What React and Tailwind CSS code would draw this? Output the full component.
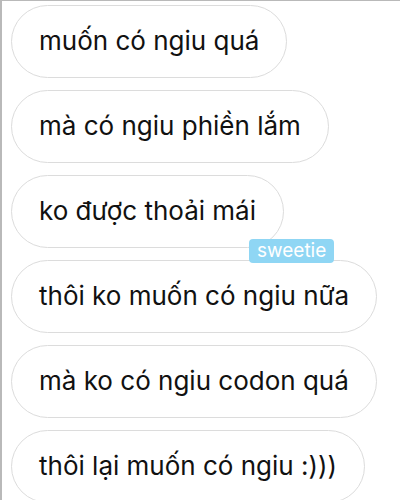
import React from "react";

const lines = [
    "muốn có ngiu quá",
    "mà có ngiu phiền lắm",
    "ko được thoải mái",
    "thôi ko muốn có ngiu nữa",
    "mà ko có ngiu codon quá",
    "thôi lại muốn có ngiu :)))",
];

const Bubble = ({ text, tag }) => (
    <div className="relative">
        <div className="h-[73px] flex items-center rounded-full border-[1.5px] border-[#dcdcdc] bg-white px-[27px] pb-[2px] text-[26px] text-[#111] whitespace-nowrap">
            {text}
        </div>
        {tag && (
            <span className="absolute left-[238px] top-[-21px] h-[24px] px-[8px] flex items-center rounded-[4px] bg-[#8fd6f4] text-white text-[19px] leading-none pb-[1px]">
                {tag}
            </span>
        )}
    </div>
);

const App = () => {
    return (
        <div
            className="w-[400px] h-[500px] overflow-hidden bg-white border-l-2 border-t border-[#b9b9b9]"
            style={{ fontFamily: "Inter, 'Noto Sans', sans-serif" }}
        >
            <div className="flex flex-col items-start gap-3 pl-[9px] pt-1">
                {lines.map((t, i) => (
                    <Bubble key={i} text={t} tag={i === 3 ? "sweetie" : null} />
                ))}
            </div>
        </div>
    );
};

export default App;
